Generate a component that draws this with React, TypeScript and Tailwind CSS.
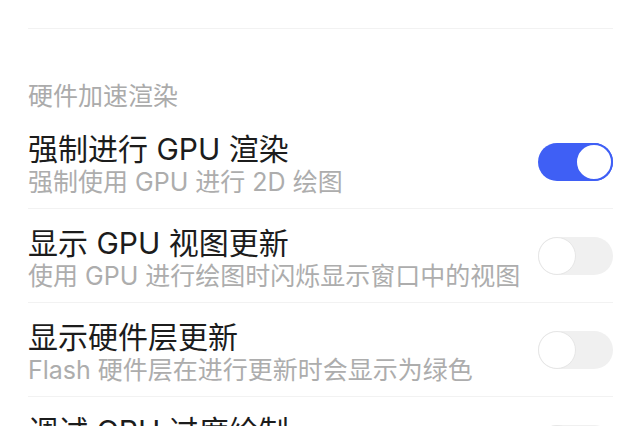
import { useState } from "react"

type Setting = {
  id: string
  title: string
  desc: string
  on: boolean
}

const initial: Setting[] = [
  { id: "gpu-render", title: "强制进行 GPU 渲染", desc: "强制使用 GPU 进行 2D 绘图", on: true },
  { id: "gpu-view", title: "显示 GPU 视图更新", desc: "使用 GPU 进行绘图时闪烁显示窗口中的视图", on: false },
  { id: "hw-layer", title: "显示硬件层更新", desc: "Flash 硬件层在进行更新时会显示为绿色", on: false },
  { id: "overdraw", title: "调试 GPU 过度绘制", desc: "显示过度绘制区域", on: false },
]

function Toggle({ on, onClick }: { on: boolean; onClick: () => void }) {
  return (
    <button
      type="button"
      onClick={onClick}
      className={
        on
          ? "flex h-[38px] w-[75px] shrink-0 justify-end rounded-full bg-[#3f5ff5]"
          : "flex h-[38px] w-[75px] shrink-0 justify-start rounded-full bg-[#f0f0f0]"
      }
    >
      <span
        className={
          on
            ? "h-[38px] w-[38px] rounded-full border-2 border-[#3f5ff5] bg-white"
            : "h-[38px] w-[38px] rounded-full border border-[#e6e6e6] bg-white"
        }
      />
    </button>
  )
}

export default function App() {
  const [items, setItems] = useState(initial)

  const flip = (id: string) =>
    setItems((prev) => prev.map((s) => (s.id === id ? { ...s, on: !s.on } : s)))

  return (
    <div
      className="h-[426px] w-full overflow-hidden bg-white px-[28px]"
      style={{ fontFamily: 'Inter, "Noto Sans CJK SC", sans-serif' }}
    >
      <div className="h-[29px] border-b border-[#f2f2f2]" />
      <div className="pb-[3px] pt-[51px] text-[25px] leading-[32px] text-[#ababab]">硬件加速渲染</div>
      <ul>
        {items.map((s) => (
          <li key={s.id} className="flex items-center gap-4 border-b border-[#f2f2f2]">
            <div className="min-w-0 flex-1 pb-[10px] pt-[16px]">
              <p className="truncate text-[30px] leading-[36px] text-[#1c1c1c]">{s.title}</p>
              <p className="truncate text-[25px] leading-[31px] text-[#adadad]">{s.desc}</p>
            </div>
            <Toggle on={s.on} onClick={() => flip(s.id)} />
          </li>
        ))}
      </ul>
    </div>
  )
}
